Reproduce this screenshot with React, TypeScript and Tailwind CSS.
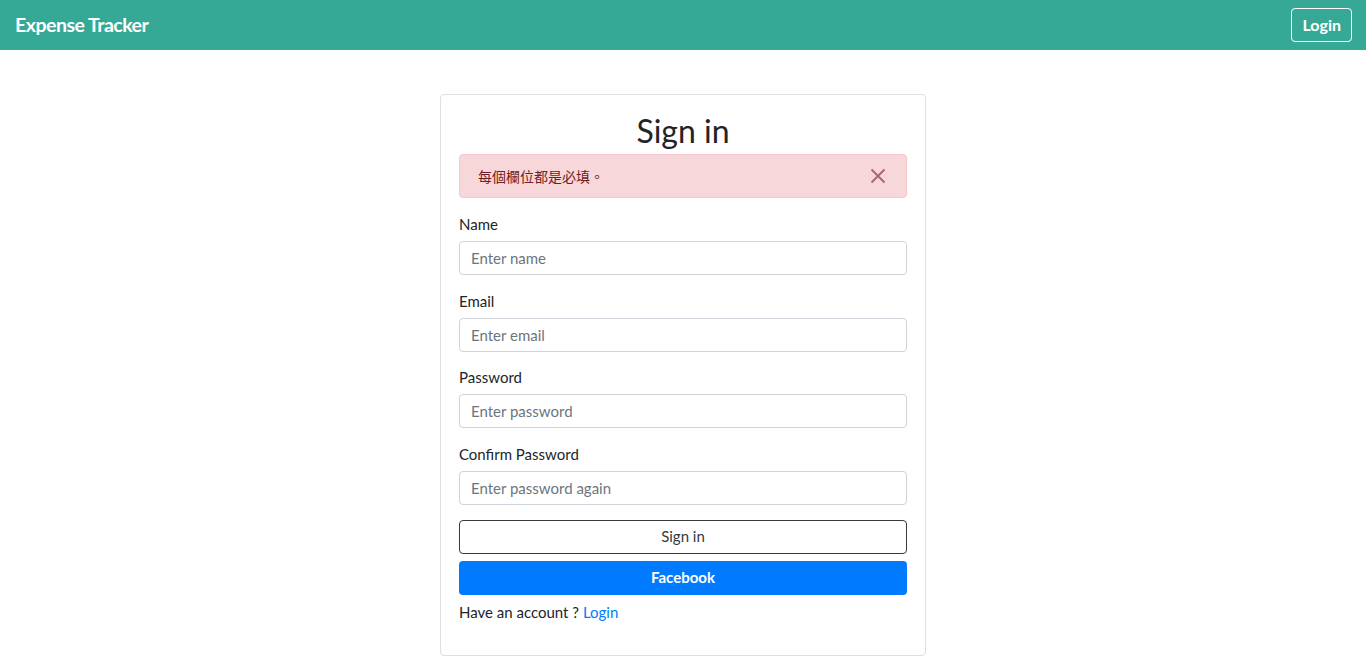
import React from "react";

export default function App() {
  const fields = [
    { label: "Name", ph: "Enter name", type: "text" },
    { label: "Email", ph: "Enter email", type: "email" },
    { label: "Password", ph: "Enter password", type: "password" },
    { label: "Confirm Password", ph: "Enter password again", type: "password" },
  ];
  return (
    <div className="min-h-screen bg-white text-[#212529]" style={{ fontFamily: '"Lato", "Noto Sans CJK TC", sans-serif' }}>
      <nav className="h-[50px] bg-[#35a996] flex items-center justify-between pl-[15px] pr-[14px]">
        <span className="text-white text-[19.5px] font-bold tracking-[-0.5px]">Expense Tracker</span>
        <button className="h-[34px] px-[10px] border border-white rounded-[4px] text-white text-[16px] font-bold">Login</button>
      </nav>
      <div className="flex justify-center pt-[44px]">
        <div className="w-[486px] border border-[#dfdfdf] rounded-[4px] px-[18px] pt-[16px] pb-[32px]">
          <h1 className="text-center text-[32px] leading-[40px] text-[#212529]">Sign in</h1>
          <div className="mt-[3px] h-[44px] bg-[#f8d7da] border border-[#f5c6cb] rounded-[4px] flex items-center justify-between pl-[18px] pr-[20px] text-[#721c24] text-[14px]">
            <span>每個欄位都是必填。</span>
            <svg width="16" height="16" viewBox="0 0 16 16" className="opacity-60">
              <path d="M1.5 1.5 L14.5 14.5 M14.5 1.5 L1.5 14.5" stroke="#721c24" strokeWidth="1.8" />
            </svg>
          </div>
          <div className="mt-[16px] flex flex-col gap-[15.5px]">
            {fields.map((f) => (
              <div key={f.label} className="flex flex-col">
                <label className="text-[15px] leading-[20px] mb-[7px]">{f.label}</label>
                <input
                  type={f.type}
                  placeholder={f.ph}
                  className="h-[34px] w-full border border-[#ced4da] rounded-[4px] px-[11px] text-[15px] placeholder:text-[#6c757d] outline-none"
                />
              </div>
            ))}
          </div>
          <button className="mt-[15px] w-full h-[34px] border border-[#343a40] rounded-[4px] text-[15px] text-[#343a40]">Sign in</button>
          <button className="mt-[7px] w-full h-[34px] bg-[#007bff] rounded-[4px] text-[15px] text-white font-bold">Facebook</button>
          <p className="mt-[6px] text-[15px] leading-[22px]">
            Have an account ? <a className="text-[#007bff]">Login</a>
          </p>
        </div>
      </div>
    </div>
  );
}
